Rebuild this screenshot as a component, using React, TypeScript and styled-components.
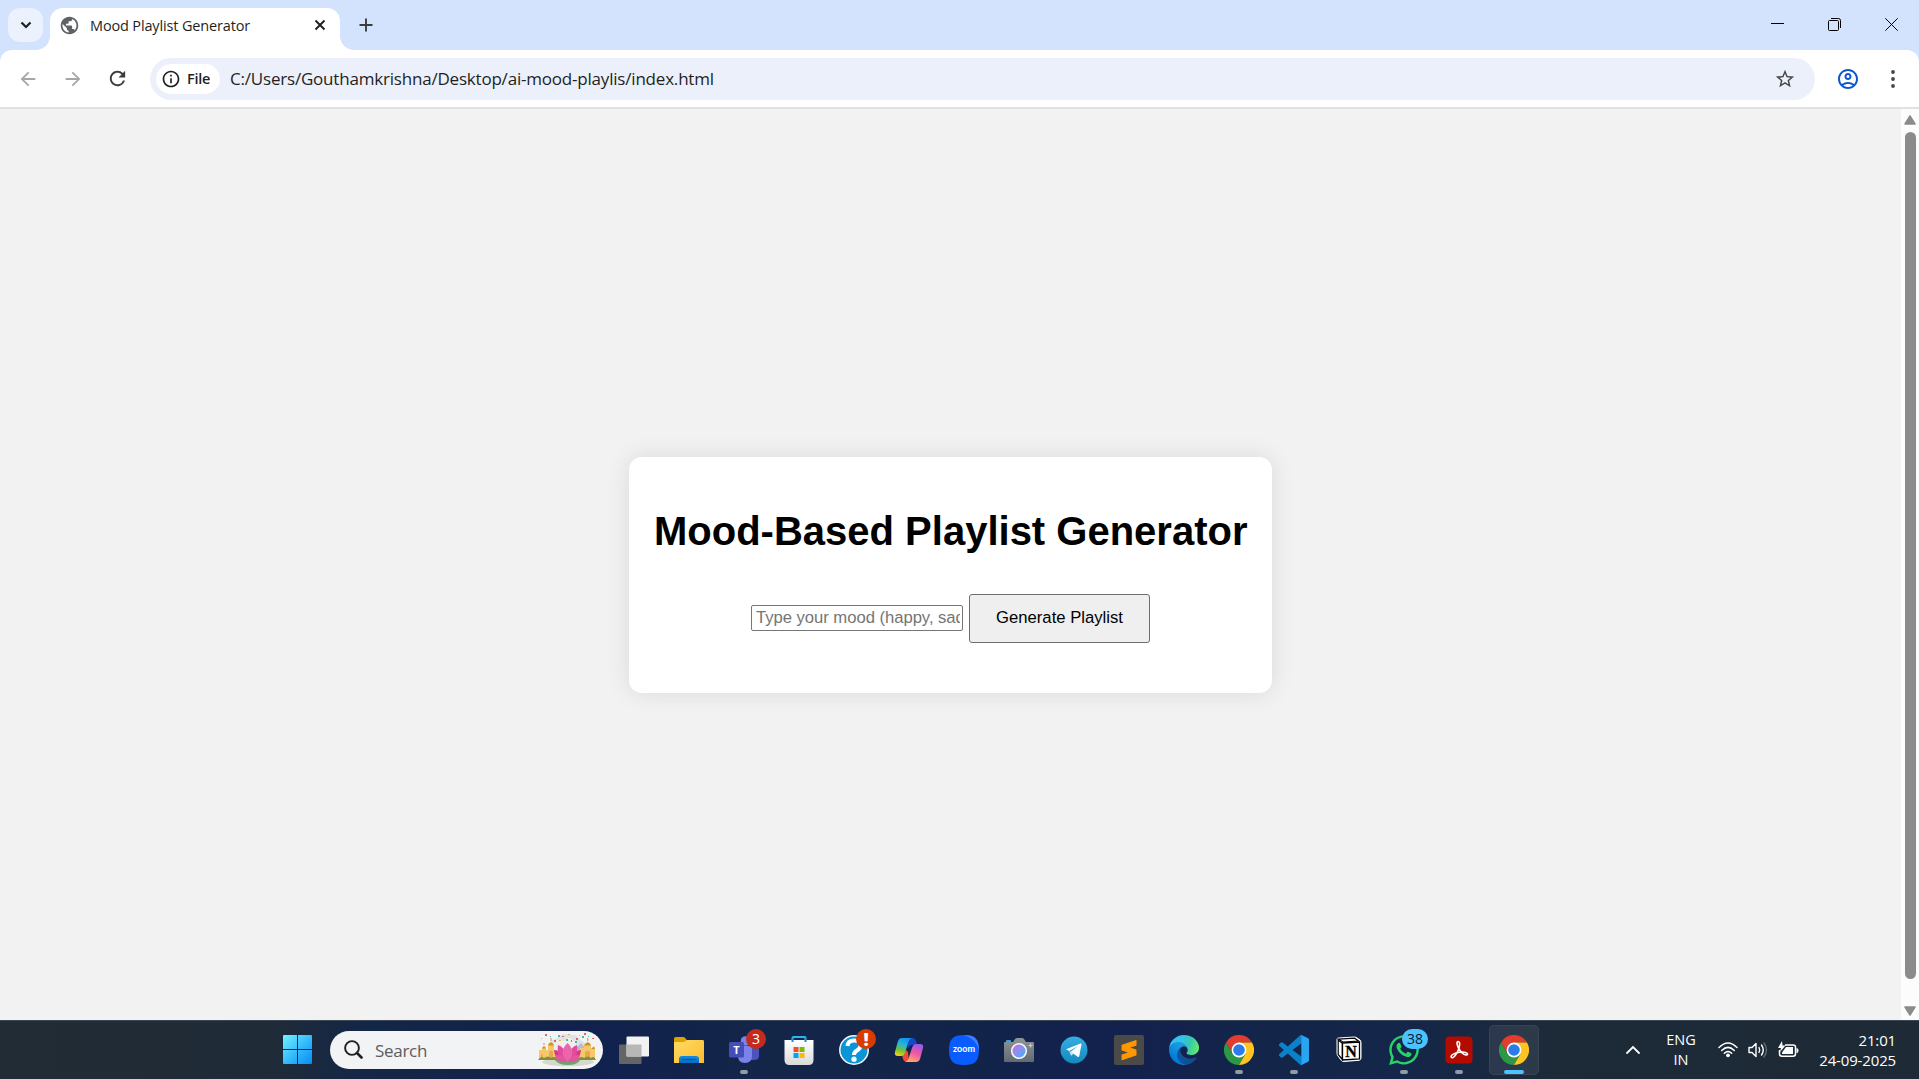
import React from "react";
import styled, { createGlobalStyle } from "styled-components";
import {
  MdArrowBack,
  MdArrowForward,
  MdOutlineAccountCircle,
  MdOutlineInfo,
  MdPublic,
  MdRefresh,
  MdStarBorder,
} from "react-icons/md";
import { FaWhatsapp } from "react-icons/fa";

const uiFont = `"Open Sans", "Noto Sans", sans-serif`;
const pageFont = `"Liberation Sans", Arial, sans-serif`;

const GlobalStyle = createGlobalStyle`
  *, *::before, *::after { box-sizing: border-box; }
  html, body { margin: 0; padding: 0; overflow: hidden; }
  svg { display: block; flex: none; }
`;

const Screen = styled.div`
  width: 1919px;
  height: 1079px;
  display: flex;
  flex-direction: column;
  overflow: hidden;
  font-family: ${uiFont};
  color: #1f1f1f;
`;

/* ---------- browser frame ---------- */

const TabStrip = styled.div`
  height: 50px;
  flex: none;
  display: flex;
  background: #d3e3fd;
  padding-left: 8px;
`;

const TabSearch = styled.div`
  width: 35px;
  height: 34px;
  margin: 8px 7px 0 0;
  border-radius: 12px;
  background: #ebf1fd;
  display: grid;
  place-items: center;
`;

const Tab = styled.div`
  position: relative;
  width: 290px;
  height: 42px;
  margin-top: 8px;
  padding: 0 14px 8px 9px;
  border-radius: 13px 13px 0 0;
  background: #fff;
  display: flex;
  align-items: center;

  &::before,
  &::after {
    content: "";
    position: absolute;
    bottom: 0;
    width: 14px;
    height: 14px;
  }
  &::before {
    left: -14px;
    background: radial-gradient(circle at 0 0, transparent 13.5px, #fff 14.2px);
  }
  &::after {
    right: -14px;
    background: radial-gradient(circle at 100% 0, transparent 13.5px, #fff 14.2px);
  }
`;

const TabTitle = styled.span`
  flex: 1;
  margin-left: 10px;
  padding-top: 1px;
  font-size: 14.5px;
  line-height: 20px;
  letter-spacing: -0.15px;
  white-space: nowrap;
`;

const NewTab = styled.div`
  width: 52px;
  height: 50px;
  display: grid;
  place-items: center;
`;

const WindowButtons = styled.div`
  margin-left: auto;
  display: flex;
  height: 49px;
`;

const WindowButton = styled.div<{ $width: number }>`
  width: ${(p) => p.$width}px;
  display: grid;
  place-items: center;
`;

const ToolbarBack = styled.div`
  flex: none;
  background: #d3e3fd;
`;

const Toolbar = styled.div`
  height: 59px;
  background: #fff;
  border-bottom: 2px solid #e1e1e1;
  border-radius: 12px 12px 0 0;
  display: flex;
  align-items: center;
  padding-left: 5px;
`;

const NavButton = styled.div<{ $color: string }>`
  width: 45px;
  display: grid;
  place-items: center;
  color: ${(p) => p.$color};
`;

const Omnibox = styled.div`
  width: 1665px;
  height: 42px;
  margin: 0 10px;
  padding: 0 19px 0 6px;
  border-radius: 21px;
  background: #ecf0fa;
  display: flex;
  align-items: center;
`;

const FileChip = styled.div`
  width: 64px;
  height: 30px;
  padding-left: 5px;
  border-radius: 15px;
  background: #fff;
  display: flex;
  align-items: center;
  gap: 6px;
  font-size: 14.5px;
  font-weight: 600;
  letter-spacing: -0.3px;
  line-height: 20px;
`;

const Address = styled.span`
  flex: 1;
  margin-left: 10px;
  padding-top: 1px;
  font-size: 17px;
  line-height: 24px;
  letter-spacing: -0.2px;
  white-space: nowrap;
`;

/* ---------- web page ---------- */

const Viewport = styled.div`
  flex: 1;
  display: flex;
  min-height: 0;
  background: #f2f2f2;
`;

const Page = styled.main`
  flex: 1;
  display: flex;
  align-items: center;
  justify-content: center;
  padding-top: 21px;
  font-family: ${pageFont};
`;

const Card = styled.section`
  width: 643px;
  height: 236px;
  padding: 25px;
  border-radius: 12.5px;
  background: #fff;
  box-shadow: 0 0 25px rgba(0, 0, 0, 0.1);
  text-align: center;
`;

const Heading = styled.h1`
  margin: 26px 0 0;
  font-size: 40px;
  line-height: 46px;
  font-weight: 700;
  color: #000;
  white-space: nowrap;
`;

const Form = styled.div`
  margin-top: 40px;
  display: flex;
  justify-content: center;
  align-items: center;
  gap: 6px;
`;

const MoodInput = styled.input`
  width: 212px;
  height: 26px;
  margin-top: -1px;
  padding: 0 2px 0 4px;
  border: 1px solid #767676;
  border-radius: 2px;
  background: #fff;
  font: 16.67px ${pageFont};
  letter-spacing: -0.04px;
  outline: none;

  &::placeholder {
    color: #757575;
    opacity: 1;
  }
`;

const GenerateButton = styled.button`
  width: 181px;
  height: 49px;
  padding: 0 0 2px;
  border: 1px solid #6f6f6f;
  border-radius: 3px;
  background: #efefef;
  color: #000;
  font: 16.67px ${pageFont};
  white-space: nowrap;
`;

const Scrollbar = styled.div`
  width: 18px;
  background: #fcfcfc;
  display: flex;
  flex-direction: column;
  align-items: center;
  padding: 6px 0 4px;
`;

const Thumb = styled.div`
  width: 11px;
  height: 847px;
  margin: 7px 0 auto;
  border-radius: 6px;
  background: #8b8b8b;
`;

/* ---------- taskbar ---------- */

const Taskbar = styled.footer`
  height: 59px;
  flex: none;
  display: flex;
  align-items: center;
  padding: 0 0 1px 270px;
  border-top: 1px solid #3a4856;
  background: linear-gradient(
    90deg,
    #222c34 0,
    #1f2b37 270px,
    #152745 350px,
    #11214e 590px,
    #142648 780px,
    #12234b 1000px,
    #14214e 1130px,
    #132649 1280px,
    #14264a 1400px,
    #1c2a39 1540px,
    #1e2a35 1919px
  );
  color: #fff;
`;

const Slot = styled.div<{ $active?: boolean }>`
  position: relative;
  width: 50px;
  height: 50px;
  margin: 0 2.5px;
  border-radius: 5px;
  display: grid;
  place-items: center;
  flex: none;
  background: ${(p) => (p.$active ? "rgba(255,255,255,0.08)" : "transparent")};
  box-shadow: ${(p) => (p.$active ? "inset 0 0 0 1px rgba(255,255,255,0.06)" : "none")};
`;

const Indicator = styled.i<{ $active?: boolean }>`
  position: absolute;
  bottom: 1px;
  left: ${(p) => (p.$active ? 15 : 21)}px;
  width: ${(p) => (p.$active ? 20 : 8)}px;
  height: 4px;
  border-radius: 2px;
  background: ${(p) => (p.$active ? "#4cc2ff" : "#9299a8")};
`;

const Badge = styled.b<{ $color: string; $dark?: boolean; $bold?: boolean }>`
  position: absolute;
  top: 4px;
  right: ${(p) => (p.$dark ? 1 : 3)}px;
  width: ${(p) => (p.$dark ? 26 : 20)}px;
  height: 20px;
  border-radius: 10px;
  background: ${(p) => p.$color};
  color: ${(p) => (p.$dark ? "#0b1a28" : "#fff")};
  font-size: ${(p) => (p.$bold ? 18 : 14)}px;
  line-height: 20px;
  font-weight: ${(p) => (p.$bold ? 800 : 400)};
  text-align: center;
`;

const SearchBox = styled.div`
  width: 273px;
  height: 38px;
  margin: 0 3.5px 0 5px;
  padding: 0 7px 0 14px;
  border-radius: 19px;
  background: #f2f3f5;
  display: flex;
  align-items: center;
  flex: none;
`;

const SearchText = styled.span`
  flex: 1;
  margin-left: 12px;
  padding-top: 2px;
  color: #5b5d60;
  font-size: 17px;
  line-height: 24px;
  letter-spacing: -0.3px;
`;

const Tray = styled.div`
  margin-left: auto;
  padding-right: 23px;
  display: flex;
  align-items: center;
`;

const Language = styled.div`
  width: 40px;
  margin: 0 17px 0 20px;
  text-align: center;
  font-size: 14.5px;
  line-height: 20px;
`;

const Status = styled.div`
  display: flex;
  align-items: center;
  gap: 10px;
`;

const Clock = styled.div`
  width: 97px;
  text-align: right;
  font-size: 15px;
  line-height: 20px;
  letter-spacing: -0.15px;
  white-space: nowrap;
`;

/* ---------- drawings ---------- */

const Lotus = () => (
  <svg width="58" height="34" viewBox="0 0 58 34">
    <path d="M10 16Q11 5 19 6Q24-1 32 2Q39 1 42 7Q49 9 48 17Z" fill="#dde2e5" />
    <path d="M15 13Q17 4 26 8Q31 1 37 9L42 18H15Z" fill="#eeeeec" />
    <path d="M36 17L43 10L50 18Z" fill="#bcb5df" />
    <ellipse cx="30" cy="29" rx="26" ry="4.2" fill="#d5d9cc" />
    <path d="M1 27V17H4V15Q6 12 8 15V17H10V12Q13 7 16 12V18H42V15H46V12Q50 7 53 12V16H55V14Q57 12 57 15V27Z" fill="#f5c86c" />
    <path d="M10 12.500Q13 6 16 12.500ZM4 15.500Q6 11 8 15.500ZM46 12.500Q50 6 53 12.500ZM53 16Q56 12 57 16Z" fill="#cf9120" />
    <path d="M13 8V5M49.700 8V5M6 12V10" stroke="#c78b20" strokeWidth=".9" />
    <path d="M3 27V22Q4 20 5 22V27ZM11 26V19Q13 16 15 19V26ZM47 26V19Q50 16 52 19V26Z" fill="#eaa849" />
    <path d="M0 27Q3 22 6 25Q10 22 13 25Q17 22 22 27ZM38 27Q43 22 46 25Q50 22 53 25Q56 22 58 27Z" fill="#7d9140" />
    <path d="M17 27Q29 23 42 27Q40 32 30 32Q20 32 17 27Z" fill="#6da66b" />
    <path d="M29 29C20 30 17 24 16 17Q21 17 24 22ZM30 29C39 30 42 24 43 17Q38 17 35 22Z" fill="#d13b89" />
    <path d="M29 29C20 27 19 19 20 12Q26 14 28 21ZM30 29C39 27 40 19 39 12Q33 14 31 21Z" fill="#e14c9b" />
    <path d="M29.500 29C22 23 24 15 29.500 10C35 15 37 23 29.500 29Z" fill="#ea65ab" />
    <path d="M29.500 29C20 30 18 26 17 22Q25 21 29.500 29ZM29.500 29C39 30 41 26 42 22Q34 21 29.500 29Z" fill="#e5549f" />
    <g fill="#e66467">
      <path d="M7 1h2v2H7zM16 7h2v2h-2zM24 3h2v1h-2zM38 5h2v2h-2zM46 0h2v2h-2zM54 5h2v1h-2zM33 7h1v2h-1z" />
    </g>
    <g fill="#47baa1">
      <path d="M20 2h2v2h-2zM28 6h2v2h-2zM44 3h2v2h-2zM37 8h2v2h-2zM12 3h1v1h-1zM50 3h1v1h-1z" />
    </g>
    <g fill="#e9b63e">
      <path d="M3 5h1v1H3zM30 1h2v1h-2zM41 2h1v1h-1zM21 7h2v1h-2z" />
    </g>
  </svg>
);

const StartIcon = () => (
  <svg width="29" height="29" viewBox="0 0 29 29">
    <defs>
      <linearGradient id="start" x1="0" y1="0" x2="29" y2="29" gradientUnits="userSpaceOnUse">
        <stop stopColor="#75f2ff" />
        <stop offset=".5" stopColor="#36bdfb" />
        <stop offset="1" stopColor="#078bf2" />
      </linearGradient>
    </defs>
    <path d="M1 0h13v14H0V1Q0 0 1 0ZM15 0h13q1 0 1 1v13H15ZM0 15h14v14H1Q0 29 0 28ZM15 15h14v13q0 1-1 1H15Z" fill="url(#start)" />
  </svg>
);

const TaskViewIcon = () => (
  <svg width="31" height="30" viewBox="0 0 31 30">
    <rect x="0" y="9.500" width="22.500" height="19.500" rx="1" fill="#656565" />
    <rect x="7.500" y="1.500" width="22.500" height="20" rx="1" fill="#f2f2f2" />
    <path d="M7.500 9.500h15v12h-15z" fill="#b7b7b7" />
  </svg>
);

const FolderIcon = () => (
  <svg width="30" height="30" viewBox="0 0 30 30">
    <defs>
      <linearGradient id="folder" x1="0" y1="0" x2="1" y2="1">
        <stop stopColor="#ffdb65" />
        <stop offset="1" stopColor="#fdbc2c" />
      </linearGradient>
      <linearGradient id="folderbase" x1="0" y1="0" x2="0" y2="1">
        <stop stopColor="#118de0" />
        <stop offset="1" stopColor="#086cc2" />
      </linearGradient>
    </defs>
    <path d="M0 3.500Q0 2 2 2h7q2 0 3 2l2 3H0Z" fill="#dfa000" />
    <path d="M0 7h10l3-2h16q1 0 1 2v21H0Z" fill="url(#folder)" />
    <path d="M5 28v-4q0-3 3-3h14q3 0 3 3v4Z" fill="url(#folderbase)" />
    <path d="M8.500 24.500h13" stroke="#07569d" strokeWidth="1.2" />
  </svg>
);

const TeamsIcon = () => (
  <svg width="30" height="30" viewBox="0 0 30 30">
    <circle cx="16.500" cy="6" r="4.800" fill="#7b83eb" />
    <path d="M20 11h10v10q0 4-5 4h-4Z" fill="#4b53bc" />
    <path d="M9 11h14v10q0 7-7 7t-7-7Z" fill="#7b83eb" />
    <rect y="7" width="15" height="15.500" rx="1.500" fill="#454db8" />
    <text x="7.500" y="18.500" textAnchor="middle" fontFamily="Open Sans, sans-serif" fontWeight="700" fontSize="11" fill="#fff">T</text>
  </svg>
);

const StoreIcon = () => (
  <svg width="30" height="30" viewBox="0 0 30 30">
    <defs>
      <linearGradient id="store" x1="0" y1="0" x2="0" y2="1">
        <stop stopColor="#fff" />
        <stop offset="1" stopColor="#dadada" />
      </linearGradient>
    </defs>
    <path d="M8.500 7V3q0-1 1-1h11q1 0 1 1v4" fill="none" stroke="#29b6f0" strokeWidth="2" />
    <path d="M.5 5h29v20q0 5-5 5h-19q-5 0-5-5Z" fill="url(#store)" />
    <path d="M8.500 7V3.500M21.500 7V3.500" stroke="#1588cc" strokeWidth="2" />
    <path d="M9.500 12h5v5h-5Z" fill="#f25022" />
    <path d="M15.500 12h5v5h-5Z" fill="#7fba00" />
    <path d="M9.500 18h5v5h-5Z" fill="#00a4ef" />
    <path d="M15.500 18h5v5h-5Z" fill="#ffb900" />
  </svg>
);

const HelpIcon = () => (
  <svg width="30" height="30" viewBox="0 0 30 30">
    <circle cx="15" cy="15" r="14.200" fill="#0a96d6" stroke="#f3f8fc" strokeWidth="1.500" />
    <path d="M8.500 11Q9 5.500 15 5.500Q21.500 5.500 21.500 10.500Q21.500 13.500 18 15.500Q15 17.200 15 20" fill="none" stroke="#fff" strokeWidth="4" />
    <circle cx="15" cy="24.200" r="2.600" fill="#fff" />
  </svg>
);

const CopilotIcon = () => (
  <svg width="30" height="30" viewBox="0 0 30 30">
    <defs>
      <linearGradient id="copA" x1=".6" y1="0" x2=".3" y2="1">
        <stop stopColor="#1592ed" />
        <stop offset=".35" stopColor="#22b5dc" />
        <stop offset=".7" stopColor="#6fc23b" />
        <stop offset="1" stopColor="#f3cf10" />
      </linearGradient>
      <linearGradient id="copB" x1=".7" y1="0" x2=".3" y2="1">
        <stop stopColor="#9b59e8" />
        <stop offset=".5" stopColor="#f158a4" />
        <stop offset="1" stopColor="#ffac66" />
      </linearGradient>
    </defs>
    <path d="M14 3h5q2 0 3 3l1 4h-5q-3 0-4 4Z" fill="#1748c9" />
    <path d="M8 20l4-5 2 2 1 10h-2q-3 0-4-3Z" fill="#ed4b38" />
    <path d="M8 3h10q-3 1-4 5l-3 10q-1 3-4 3H4Q0 21 1 17L4 6Q5 3 8 3Z" fill="url(#copA)" />
    <path d="M22 27H11q3-1 4-5l3-9q1-4 5-4h3q4 0 3 4l-3 11q-1 3-4 3Z" fill="url(#copB)" />
  </svg>
);

const ZoomIcon = () => (
  <svg width="30" height="30" viewBox="0 0 30 30">
    <path d="M15 0C26 0 30 4 30 15S26 30 15 30 0 26 0 15 4 0 15 0Z" fill="#0b5cff" />
    <path d="M15 0C26 0 30 4 30 15Q27 4 15 0Z" fill="#3f7dff" />
    <text x="15" y="17" textAnchor="middle" textLength="22" lengthAdjust="spacingAndGlyphs" fontFamily="Lato, sans-serif" fontWeight="700" fontSize="8.500" fill="#fff">zoom</text>
  </svg>
);

const CameraIcon = () => (
  <svg width="30" height="30" viewBox="0 0 30 30">
    <defs>
      <linearGradient id="lens" x1="0" y1="0" x2="1" y2="1">
        <stop offset=".1" stopColor="#c073dc" />
        <stop offset=".5" stopColor="#8b91f3" />
        <stop offset="1" stopColor="#20baf3" />
      </linearGradient>
      <linearGradient id="body" x1="0" y1="0" x2="0" y2="1">
        <stop stopColor="#8d949a" />
        <stop offset="1" stopColor="#626a71" />
      </linearGradient>
    </defs>
    <path d="M2 8V6q0-1 1-1h3q1 0 1 1v2Z" fill="#2aa6e4" />
    <path d="M1 7h8l2-3q1-1 2-1h5q1 0 2 1l2 3h7q1 0 1 1v18q0 1-1 1H1q-1 0-1-1V8q0-1 1-1Z" fill="url(#body)" />
    <circle cx="15" cy="16" r="7.300" fill="url(#lens)" stroke="#f5f5f5" strokeWidth="1.600" />
    <path d="M26.500 8.500v4M24.500 10.500h4" stroke="#c5cbd0" strokeWidth="1.200" />
  </svg>
);

const TelegramIcon = () => (
  <svg width="28" height="28" viewBox="0 0 28 28">
    <defs>
      <linearGradient id="tg" x1="0" y1="0" x2="0" y2="1">
        <stop stopColor="#37aee2" />
        <stop offset="1" stopColor="#128abf" />
      </linearGradient>
    </defs>
    <circle cx="14" cy="14" r="13.500" fill="url(#tg)" />
    <path d="M6 13.200L20.500 7.600Q21.800 7.200 21.500 8.600L19.200 20.300Q18.900 21.500 17.700 20.800L10.800 15.700L17.700 10.200L9.300 15Z" fill="#fff" />
    <path d="M9.300 15L11 19.800L13.500 17.800L10.900 15.700Z" fill="#d1e9f5" />
  </svg>
);

const SublimeIcon = () => (
  <svg width="30" height="30" viewBox="0 0 30 30">
    <rect width="30" height="30" rx="2" fill="#4a4a49" />
    <g transform="translate(5.300 5) scale(.81 .84)">
      <path
        d="M20.953.004a.397.397 0 0 0-.18.017L3.225 5.585c-.175.055-.323.214-.402.398a.42.42 0 0 0-.06.22v5.726a.42.42 0 0 0 .06.22c.079.183.227.341.402.397l7.454 2.364-7.454 2.363c-.255.08-.463.374-.463.655v5.688c0 .282.208.444.463.363l17.55-5.565c.237-.075.426-.336.452-.6.003-.022.013-.04.013-.065V12.06c0-.281-.208-.575-.463-.656L13.4 9.065l7.375-2.339c.255-.08.462-.375.462-.656V.384c0-.211-.117-.355-.283-.38z"
        fill="#ff9800"
      />
    </g>
  </svg>
);

const EdgeIcon = () => (
  <svg width="30" height="30" viewBox="4.600 5 256 256">
    <defs>
      <linearGradient id="edgeA" x1="63" y1="178" x2="241" y2="178" gradientUnits="userSpaceOnUse">
        <stop stopColor="#0c59a4" />
        <stop offset="1" stopColor="#114a8b" />
      </linearGradient>
      <linearGradient id="edgeB" x1="157" y1="100" x2="46" y2="221" gradientUnits="userSpaceOnUse">
        <stop stopColor="#1b9de2" />
        <stop offset=".4" stopColor="#1595df" />
        <stop offset="1" stopColor="#0078d4" />
      </linearGradient>
      <linearGradient id="edgeC" x1="20" y1="60" x2="255" y2="130" gradientUnits="userSpaceOnUse">
        <stop stopColor="#35c1f1" />
        <stop offset=".35" stopColor="#34c1ed" />
        <stop offset=".65" stopColor="#36c9aa" />
        <stop offset="1" stopColor="#66eb6e" />
      </linearGradient>
    </defs>
    <path d="M235.680 195.460a93.730 93.730 0 01-10.540 4.710 101.870 101.870 0 01-35.900 6.460c-47.320 0-88.540-32.550-88.540-74.320A31.480 31.480 0 01117.130 105c-42.800 1.800-53.800 46.400-53.800 72.530 0 73.880 68.090 81.370 82.760 81.370 7.910 0 19.840-2.300 27-4.560l1.310-.440a128.340 128.340 0 0066.600-52.800 4 4 0 00-5.320-5.640z" fill="url(#edgeA)" />
    <path d="M110.340 246.340A79.200 79.200 0 0187.600 225a80.720 80.720 0 0129.530-120c3.120-1.470 8.450-4.130 15.540-4a32.350 32.350 0 0125.690 13 31.880 31.880 0 016.360 18.660c0-.210 24.460-79.600-80-79.600-43.900 0-80 41.660-80 78.210a130.150 130.150 0 0012.110 56 128 128 0 00156.380 67.110 75.550 75.550 0 01-62.780-8z" fill="url(#edgeB)" />
    <path d="M156.940 153.780c-.810 1.050-3.300 2.500-3.300 5.660 0 2.610 1.700 5.120 4.720 7.230 14.380 10 41.490 8.680 41.560 8.680a59.560 59.560 0 0030.270-8.350A61.380 61.380 0 00260.630 114c.260-22.410-8-37.310-11.340-43.910C228.090 28.760 182.350 5 132.590 5a128 128 0 00-128 126.200c.480-36.540 36.800-66.050 80-66.050 3.500 0 23.460.340 42 10.070 16.340 8.580 24.900 18.940 30.850 29.210 6.180 10.670 7.280 24.150 7.280 29.520s-2.740 13.330-7.780 19.830z" fill="url(#edgeC)" />
  </svg>
);

const ChromeIcon = () => (
  <svg width="30" height="30" viewBox="0 0 30 30">
    <path d="M28 7.500A15 15 0 0 0 2 7.500L8.500 18.750L15 15V7.500Z" fill="#e33b2e" />
    <path d="M2 7.500A15 15 0 0 0 15 30L21.500 18.750L15 15L8.500 18.750Z" fill="#2b9846" />
    <path d="M15 30A15 15 0 0 0 28 7.500H15V15L21.500 18.750Z" fill="#fdc422" />
    <circle cx="15" cy="15" r="7.400" fill="#fff" />
    <circle cx="15" cy="15" r="5.800" fill="#2b7bea" />
  </svg>
);

const CodeIcon = () => (
  <svg width="30" height="30" viewBox="0 0 24 24">
    <path
      d="M23.150 2.587L18.210.210a1.494 1.494 0 0 0-1.705.290l-9.460 8.630-4.120-3.128a.999.999 0 0 0-1.276.057L.327 7.261A1 1 0 0 0 .326 8.740L3.899 12 .326 15.260a1 1 0 0 0 .001 1.479L1.650 17.940a.999.999 0 0 0 1.276.057l4.120-3.128 9.460 8.630a1.492 1.492 0 0 0 1.704.290l4.942-2.377A1.500 1.500 0 0 0 24 20.060V3.939a1.500 1.500 0 0 0-.850-1.352zm-5.146 14.861L10.826 12l7.178-5.448v10.896z"
      fill="#0b80cb"
    />
    <path d="M18 .150L23.150 2.587Q24 3 24 3.939V20.060Q24 21 23.150 21.412L18.210 23.790Q18 23.850 17.500 23.850Q18 23.500 18 22.500V1.500Q18 .500 17.300.080Z" fill="#2aa5f4" />
  </svg>
);

const NotionIcon = () => (
  <svg width="26" height="28" viewBox="0 0 26 28">
    <path d="M1 3Q1 2 3 2L18 1Q20 1 21 2L24 4Q25 5 25 7V22Q25 24 23 24.300L8 25.500Q6 25.500 5 24L2 20Q1 19 1 17Z" fill="#fff" stroke="#fff" />
    <path d="M2.500 3.200L18.500 2.200L22.500 5L7 6Z" fill="#fff" stroke="#000" strokeWidth="1.200" />
    <path d="M2.200 4L6.300 7.200V23.500L2.200 18.500Z" fill="#fff" stroke="#000" strokeWidth="1.200" />
    <path d="M6.500 7L23.500 6V22.800L6.500 24Z" fill="#fff" stroke="#000" strokeWidth="1.300" />
    <text x="15" y="20.500" textAnchor="middle" fontFamily="Liberation Serif, serif" fontWeight="700" fontSize="16" fill="#000" stroke="#000" strokeWidth=".3">N</text>
  </svg>
);

const AcrobatIcon = () => (
  <svg width="28" height="28" viewBox="0 0 28 28">
    <rect x=".5" y=".5" width="27" height="27" rx="4" fill="#b30b00" />
    <path d="M13.200 5.500C11 5.500 12 10 15 14.500C17 17.500 20.500 19.600 22 18.800C24 17.500 20 15.400 14.500 16.300C9.500 17 5 19.500 6.300 21.300C8 23.400 12.500 17.500 14 12C15 8.500 15 5.500 13.200 5.500Z" fill="none" stroke="#fff" strokeWidth="1.600" />
  </svg>
);

const ChevronIcon = () => (
  <svg width="16" height="10" viewBox="0 0 16 10">
    <path d="M2 8L8 2L14 8" fill="none" stroke="#fff" strokeWidth="1.800" strokeLinecap="round" />
  </svg>
);

const WifiIcon = () => (
  <svg width="20" height="18" viewBox="0 0 20 18">
    <g fill="none" stroke="#fff" strokeWidth="1.500" strokeLinecap="round">
      <path d="M1 6.500Q10-2.500 19 6.500" />
      <path d="M3.700 9.500Q10 3.300 16.300 9.500" />
      <path d="M6.300 12.200Q10 8.700 13.700 12.200" />
    </g>
    <circle cx="10" cy="14.300" r="1.900" fill="#fff" />
  </svg>
);

const VolumeIcon = () => (
  <svg width="20" height="18" viewBox="0 0 20 18">
    <g fill="none" stroke="#fff" strokeWidth="1.400" strokeLinejoin="round" strokeLinecap="round">
      <path d="M1 6.500H4L8 2.500V15.500L4 11.500H1Z" />
      <path d="M11 6.500Q12.500 9 11 11.500M13.500 4Q17 9 13.500 14" />
      <path d="M16 2Q21 9 16 16" stroke="#5d6872" />
    </g>
  </svg>
);

const BatteryIcon = () => (
  <svg width="21" height="18" viewBox="0 0 21 18">
    <path d="M7 4H15Q17.500 4 17.500 6V13Q17.500 15.200 15 15.200H4Q1.500 15.200 1.500 13V9" fill="none" stroke="#fff" strokeWidth="1.500" />
    <path d="M8 6H15V13H4V11.500Z" fill="#fff" />
    <path d="M18.500 7Q20.500 7 20.500 9.500T18.500 12Z" fill="#fff" />
    <path d="M4 0L0 7H3L2 11L7.500 4.500H4.500Z" fill="#fff" />
  </svg>
);

interface TaskbarApp {
  name: string;
  icon: React.ReactNode;
  running?: boolean;
  active?: boolean;
  badge?: { text: string; color: string; dark?: boolean; bold?: boolean };
}

const apps: TaskbarApp[] = [
  { name: "taskview", icon: <TaskViewIcon /> },
  { name: "explorer", icon: <FolderIcon /> },
  { name: "teams", icon: <TeamsIcon />, running: true, badge: { text: "3", color: "#c42b1c" } },
  { name: "store", icon: <StoreIcon /> },
  { name: "help", icon: <HelpIcon />, badge: { text: "!", color: "#da3b01", bold: true } },
  { name: "copilot", icon: <CopilotIcon /> },
  { name: "zoom", icon: <ZoomIcon /> },
  { name: "camera", icon: <CameraIcon /> },
  { name: "telegram", icon: <TelegramIcon /> },
  { name: "sublime", icon: <SublimeIcon /> },
  { name: "edge", icon: <EdgeIcon /> },
  { name: "chrome", icon: <ChromeIcon />, running: true },
  { name: "code", icon: <CodeIcon />, running: true },
  { name: "notion", icon: <NotionIcon /> },
  { name: "whatsapp", icon: <FaWhatsapp size={34} color="#25d366" />, running: true, badge: { text: "38", color: "#4cc2ff", dark: true } },
  { name: "acrobat", icon: <AcrobatIcon />, running: true },
  { name: "browser", icon: <ChromeIcon />, running: true, active: true },
];

export default function App() {
  return (
    <Screen>
      <GlobalStyle />
      <TabStrip>
        <TabSearch>
          <svg width="12" height="8" viewBox="0 0 12 8">
            <path d="M1.500 1.500L6 6L10.500 1.500" fill="none" stroke="#1f1f1f" strokeWidth="2.200" />
          </svg>
        </TabSearch>
        <Tab>
          <MdPublic size={21} color="#5f6368" />
          <TabTitle>Mood Playlist Generator</TabTitle>
          <svg width="12" height="12" viewBox="0 0 12 12">
            <path d="M1.500 1.500L10.500 10.500M10.500 1.500L1.500 10.500" stroke="#1f1f1f" strokeWidth="1.900" />
          </svg>
        </Tab>
        <NewTab>
          <svg width="14" height="14" viewBox="0 0 14 14">
            <path d="M7 .5V13.500M.5 7H13.500" stroke="#3c3c3c" strokeWidth="1.900" />
          </svg>
        </NewTab>
        <WindowButtons>
          <WindowButton $width={57}>
            <svg width="13" height="13" viewBox="0 0 13 13">
              <path d="M0 5.500H13" stroke="#000" />
            </svg>
          </WindowButton>
          <WindowButton $width={57}>
            <svg width="13" height="13" viewBox="0 0 13 13">
              <rect x=".5" y="2.500" width="10" height="10" rx="1" fill="none" stroke="#000" />
              <path d="M3 .5H10.500Q12.500.5 12.500 2.500V10" fill="none" stroke="#000" />
            </svg>
          </WindowButton>
          <WindowButton $width={56}>
            <svg width="13" height="13" viewBox="0 0 13 13">
              <path d="M.3.3L12.700 12.700M12.700.3L.3 12.700" stroke="#000" />
            </svg>
          </WindowButton>
        </WindowButtons>
      </TabStrip>

      <ToolbarBack>
        <Toolbar>
          <NavButton $color="#a6a6a6"><MdArrowBack size={22} /></NavButton>
          <NavButton $color="#a6a6a6"><MdArrowForward size={22} /></NavButton>
          <NavButton $color="#3c3c3c"><MdRefresh size={23} /></NavButton>
          <Omnibox>
            <FileChip>
              <MdOutlineInfo size={20} />
              File
            </FileChip>
            <Address>C:/Users/Gouthamkrishna/Desktop/ai-mood-playlis/index.html</Address>
            <MdStarBorder size={22} color="#474747" />
          </Omnibox>
          <NavButton $color="#0b57d0">
            <MdOutlineAccountCircle size={24} />
          </NavButton>
          <NavButton $color="#474747">
            <svg width="4" height="18" viewBox="0 0 4 18">
              <circle cx="2" cy="2" r="1.900" fill="currentColor" />
              <circle cx="2" cy="9" r="1.900" fill="currentColor" />
              <circle cx="2" cy="16" r="1.900" fill="currentColor" />
            </svg>
          </NavButton>
        </Toolbar>
      </ToolbarBack>

      <Viewport>
        <Page>
          <Card>
            <Heading>Mood-Based Playlist Generator</Heading>
            <Form>
              <MoodInput placeholder="Type your mood (happy, sad, etc.)" />
              <GenerateButton>Generate Playlist</GenerateButton>
            </Form>
          </Card>
        </Page>
        <Scrollbar>
          <svg width="12" height="10" viewBox="0 0 12 10">
            <path d="M6 1L11 9H1Z" fill="#8b8b8b" stroke="#8b8b8b" strokeWidth="1.500" strokeLinejoin="round" />
          </svg>
          <Thumb />
          <svg width="12" height="10" viewBox="0 0 12 10">
            <path d="M6 9L11 1H1Z" fill="#8b8b8b" stroke="#8b8b8b" strokeWidth="1.500" strokeLinejoin="round" />
          </svg>
        </Scrollbar>
      </Viewport>

      <Taskbar>
        <Slot>
          <StartIcon />
        </Slot>
        <SearchBox>
          <svg width="19" height="19" viewBox="0 0 19 19">
            <circle cx="8" cy="8" r="6.900" fill="none" stroke="#1f1f1f" strokeWidth="1.900" />
            <path d="M13 13L17.500 17.500" stroke="#1f1f1f" strokeWidth="2.600" strokeLinecap="round" />
          </svg>
          <SearchText>Search</SearchText>
          <Lotus />
        </SearchBox>
        {apps.map((app) => (
          <Slot key={app.name} $active={app.active}>
            {app.icon}
            {app.running && <Indicator $active={app.active} />}
            {app.badge && (
              <Badge $color={app.badge.color} $dark={app.badge.dark} $bold={app.badge.bold}>
                {app.badge.text}
              </Badge>
            )}
          </Slot>
        ))}
        <Tray>
          <ChevronIcon />
          <Language>
            ENG
            <br />
            IN
          </Language>
          <Status>
            <WifiIcon />
            <VolumeIcon />
            <BatteryIcon />
          </Status>
          <Clock>
            21:01
            <br />
            24-09-2025
          </Clock>
        </Tray>
      </Taskbar>
    </Screen>
  );
}
